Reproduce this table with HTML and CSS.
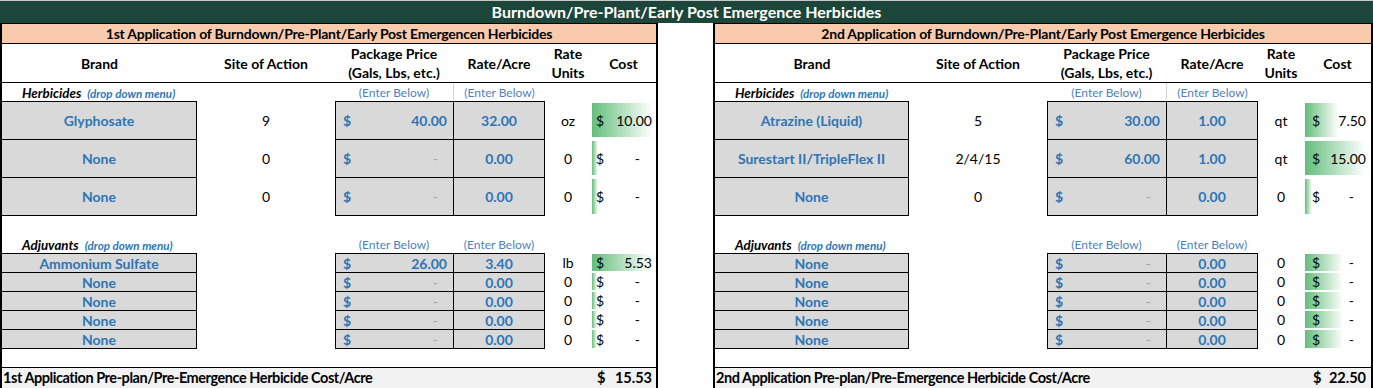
FILE: index.html
```html
<!DOCTYPE html>
<html>
<head>
<meta charset="utf-8">
<link rel="stylesheet" href="styles.css">
</head>
<body>
<div class="title">Burndown/Pre-Plant/Early Post Emergence Herbicides</div>
<div class="wrap">
  <section class="app app1">
    <div class="band">1st Application of Burndown/Pre-Plant/Early Post Emergencen Herbicides</div>
    <div class="row head">
      <div class="c">Brand</div>
      <div class="c">Site of Action</div>
      <div class="c two">Package Price<br>(Gals, Lbs, etc.)</div>
      <div class="c">Rate/Acre</div>
      <div class="c two">Rate<br>Units</div>
      <div class="c">Cost</div>
    </div>
    <div class="row label l1">
      <div class="lbl"><b>Herbicides</b><i>(drop down menu)</i></div>
      <div></div>
      <div class="enter">(Enter Below)</div>
      <div class="enter sep">(Enter Below)</div>
      <div></div><div></div>
    </div>
    <div class="block herb">
      <div class="row">
        <div class="g brand">Glyphosate</div>
        <div class="c">9</div>
        <div class="g price"><span>$</span><span class="n">40.00</span></div>
        <div class="g rate">32.00</div>
        <div class="c">oz</div>
        <div class="cost"><div class="bar" style="width:60px"></div><span>$</span><span class="v">10.00</span></div>
      </div>
      <div class="row">
        <div class="g brand">None</div>
        <div class="c">0</div>
        <div class="g price"><span>$</span><span class="d">-</span></div>
        <div class="g rate">0.00</div>
        <div class="c">0</div>
        <div class="cost"><div class="bar" style="width:6px"></div><span>$</span><span class="vd">-</span></div>
      </div>
      <div class="row">
        <div class="g brand">None</div>
        <div class="c">0</div>
        <div class="g price"><span>$</span><span class="d">-</span></div>
        <div class="g rate">0.00</div>
        <div class="c">0</div>
        <div class="cost"><div class="bar" style="width:6px"></div><span>$</span><span class="vd">-</span></div>
      </div>
    </div>
    <div class="spacer"></div>
    <div class="row label l2">
      <div class="lbl"><b>Adjuvants</b><i>(drop down menu)</i></div>
      <div></div>
      <div class="enter">(Enter Below)</div>
      <div class="enter">(Enter Below)</div>
      <div></div><div></div>
    </div>
    <div class="block adj">
      <div class="row">
        <div class="g brand">Ammonium Sulfate</div>
        <div class="c"></div>
        <div class="g price"><span>$</span><span class="n">26.00</span></div>
        <div class="g rate">3.40</div>
        <div class="c">lb</div>
        <div class="cost"><div class="bar" style="width:60px"></div><span>$</span><span class="v">5.53</span></div>
      </div>
      <div class="row">
        <div class="g brand">None</div><div class="c"></div>
        <div class="g price"><span>$</span><span class="d">-</span></div>
        <div class="g rate">0.00</div><div class="c">0</div>
        <div class="cost"><div class="bar" style="width:5px"></div><span>$</span><span class="vd">-</span></div>
      </div>
      <div class="row">
        <div class="g brand">None</div><div class="c"></div>
        <div class="g price"><span>$</span><span class="d">-</span></div>
        <div class="g rate">0.00</div><div class="c">0</div>
        <div class="cost"><div class="bar" style="width:5px"></div><span>$</span><span class="vd">-</span></div>
      </div>
      <div class="row">
        <div class="g brand">None</div><div class="c"></div>
        <div class="g price"><span>$</span><span class="d">-</span></div>
        <div class="g rate">0.00</div><div class="c">0</div>
        <div class="cost"><div class="bar" style="width:5px"></div><span>$</span><span class="vd">-</span></div>
      </div>
      <div class="row">
        <div class="g brand">None</div><div class="c"></div>
        <div class="g price"><span>$</span><span class="d">-</span></div>
        <div class="g rate">0.00</div><div class="c">0</div>
        <div class="cost"><div class="bar" style="width:5px"></div><span>$</span><span class="vd">-</span></div>
      </div>
    </div>
    <div class="spacer2"></div>
    <div class="total">
      <div class="tl">1st Application Pre-plan/Pre-Emergence Herbicide Cost/Acre</div>
      <div class="tc"><span>$</span><span>15.53</span></div>
    </div>
  </section>

  <section class="app app2">
    <div class="band">2nd Application of Burndown/Pre-Plant/Early Post Emergence Herbicides</div>
    <div class="row head">
      <div class="c">Brand</div>
      <div class="c">Site of Action</div>
      <div class="c two">Package Price<br>(Gals, Lbs, etc.)</div>
      <div class="c">Rate/Acre</div>
      <div class="c two">Rate<br>Units</div>
      <div class="c">Cost</div>
    </div>
    <div class="row label l1">
      <div class="lbl"><b>Herbicides</b><i>(drop down menu)</i></div>
      <div></div>
      <div class="enter">(Enter Below)</div>
      <div class="enter sep">(Enter Below)</div>
      <div></div><div></div>
    </div>
    <div class="block herb">
      <div class="row">
        <div class="g brand">Atrazine (Liquid)</div>
        <div class="c">5</div>
        <div class="g price"><span>$</span><span class="n">30.00</span></div>
        <div class="g rate">1.00</div>
        <div class="c">qt</div>
        <div class="cost"><div class="bar" style="width:33px"></div><span>$</span><span class="v">7.50</span></div>
      </div>
      <div class="row">
        <div class="g brand">Surestart II/TripleFlex II</div>
        <div class="c">2/4/15</div>
        <div class="g price"><span>$</span><span class="n">60.00</span></div>
        <div class="g rate">1.00</div>
        <div class="c">qt</div>
        <div class="cost"><div class="bar" style="width:60px"></div><span>$</span><span class="v">15.00</span></div>
      </div>
      <div class="row">
        <div class="g brand">None</div>
        <div class="c">0</div>
        <div class="g price"><span>$</span><span class="d">-</span></div>
        <div class="g rate">0.00</div>
        <div class="c">0</div>
        <div class="cost"><div class="bar" style="width:7px"></div><span>$</span><span class="vd">-</span></div>
      </div>
    </div>
    <div class="spacer"></div>
    <div class="row label l2">
      <div class="lbl"><b>Adjuvants</b><i>(drop down menu)</i></div>
      <div></div>
      <div class="enter">(Enter Below)</div>
      <div class="enter">(Enter Below)</div>
      <div></div><div></div>
    </div>
    <div class="block adj">
      <div class="row">
        <div class="g brand">None</div><div class="c"></div>
        <div class="g price"><span>$</span><span class="d">-</span></div>
        <div class="g rate">0.00</div><div class="c">0</div>
        <div class="cost"><div class="bar" style="width:38px"></div><span>$</span><span class="vd">-</span></div>
      </div>
      <div class="row">
        <div class="g brand">None</div><div class="c"></div>
        <div class="g price"><span>$</span><span class="d">-</span></div>
        <div class="g rate">0.00</div><div class="c">0</div>
        <div class="cost"><div class="bar" style="width:38px"></div><span>$</span><span class="vd">-</span></div>
      </div>
      <div class="row">
        <div class="g brand">None</div><div class="c"></div>
        <div class="g price"><span>$</span><span class="d">-</span></div>
        <div class="g rate">0.00</div><div class="c">0</div>
        <div class="cost"><div class="bar" style="width:38px"></div><span>$</span><span class="vd">-</span></div>
      </div>
      <div class="row">
        <div class="g brand">None</div><div class="c"></div>
        <div class="g price"><span>$</span><span class="d">-</span></div>
        <div class="g rate">0.00</div><div class="c">0</div>
        <div class="cost"><div class="bar" style="width:38px"></div><span>$</span><span class="vd">-</span></div>
      </div>
      <div class="row">
        <div class="g brand">None</div><div class="c"></div>
        <div class="g price"><span>$</span><span class="d">-</span></div>
        <div class="g rate">0.00</div><div class="c">0</div>
        <div class="cost"><div class="bar" style="width:38px"></div><span>$</span><span class="vd">-</span></div>
      </div>
    </div>
    <div class="spacer2"></div>
    <div class="total">
      <div class="tl">2nd Application Pre-plan/Pre-Emergence Herbicide Cost/Acre</div>
      <div class="tc"><span>$</span><span>22.50</span></div>
    </div>
  </section>
</div>
</body>
</html>
```

FILE: styles.css
```css
* { box-sizing: border-box; }
html, body { margin: 0; padding: 0; overflow: hidden; }
body {
  width: 1373px;
  height: 388px;
  background: #fff;
  font-family: Lato, "Open Sans", sans-serif;
  font-size: 14px;
  color: #000;
}
.title {
  height: 23px;
  border-top: 1px solid #c8c8c8;
  background: #1c4639;
  color: #fff;
  font-weight: bold;
  font-size: 16px;
  line-height: 22px;
  text-align: center;
}
.wrap {
  display: flex;
  gap: 55px;
}
.app {
  border-top: 1px solid #000;
  border-left: 2px solid #000;
  border-right: 2px solid #000;
  height: 365px;
}
.app1 { width: 658px; --cols: 195px 138px 118px 92px 46px 1fr; }
.app2 { width: 660px; --cols: 194px 138px 119px 92px 46px 1fr; }
.band {
  height: 20px;
  background: #f8cbad;
  border-bottom: 1px solid #000;
  text-align: center;
  font-weight: bold;
  font-size: 14px;
  letter-spacing: -0.22px;
  line-height: 19px;
}
.row {
  display: grid;
  grid-template-columns: var(--cols);
}
.c {
  display: flex;
  align-items: center;
  justify-content: center;
  text-align: center;
}
.head {
  height: 39px;
  border-bottom: 1px solid #000;
  font-weight: bold;
}
.head .two { line-height: 19px; }
.label { align-items: center; }
.l1 { height: 18px; }
.l2 { height: 17px; }
.lbl {
  padding-left: 20px;
  white-space: nowrap;
}
.lbl b { font-style: italic; font-size: 13.3px; }
.lbl i {
  color: #2e75b6;
  font-weight: bold;
  font-size: 11.6px;
  margin-left: 6px;
}
.enter {
  color: #4f81bd;
  font-size: 12px;
  text-align: center;
  height: 100%;
  display: flex;
  align-items: center;
  justify-content: center;
}
.enter.sep { border-left: 1px solid #d4d4d4; }
.herb .row { height: 38px; }
.herb .row:last-child { height: 39px; }
.adj .row { height: 19px; }
.adj .row:last-child { height: 20px; }
.g {
  background: #d9d9d9;
  border-top: 1px solid #000;
  color: #2e75b6;
  font-weight: bold;
}
.row:last-child .g { border-bottom: 1px solid #000; }
.brand {
  border-right: 1px solid #000;
  display: flex;
  align-items: center;
  justify-content: center;
}
.price {
  border-left: 1px solid #000;
  display: flex;
  align-items: center;
  justify-content: space-between;
  padding: 0 6px 0 7px;
}
.price .d { color: #8ea9c8; margin-right: 9px; font-weight: normal; }
.rate {
  border-left: 1px solid #000;
  border-right: 1px solid #000;
  display: flex;
  align-items: center;
  justify-content: center;
}
.cost {
  position: relative;
  display: flex;
  align-items: center;
  justify-content: space-between;
  padding: 0 4px 0 5px;
}
.app2 .cost { padding: 0 5px 0 8px; }
.cost span { position: relative; }
.cost .vd { margin-right: 12px; }
.bar {
  position: absolute;
  left: 1px;
  top: 2px;
  bottom: 2px;
  background: linear-gradient(to right, #63be7b, #ffffff);
}
.adj .bar { top: 1px; bottom: 1px; }
.spacer { height: 20px; }
.spacer2 { height: 18px; }
.total {
  height: 21px;
  border-top: 1px solid #000;
  background: #f2f2f2;
  display: grid;
  grid-template-columns: var(--cols);
  font-weight: bold;
  font-size: 14.5px;
  line-height: 20px;
}
.tl {
  grid-column: 1 / 6;
  white-space: nowrap;
  padding-left: 1px;
  letter-spacing: -0.45px;
}
.tc {
  grid-column: 6;
  display: flex;
  justify-content: space-between;
  padding: 0 4px 0 6px;
}
.app2 .tc { padding: 0 5px 0 9px; }
```
